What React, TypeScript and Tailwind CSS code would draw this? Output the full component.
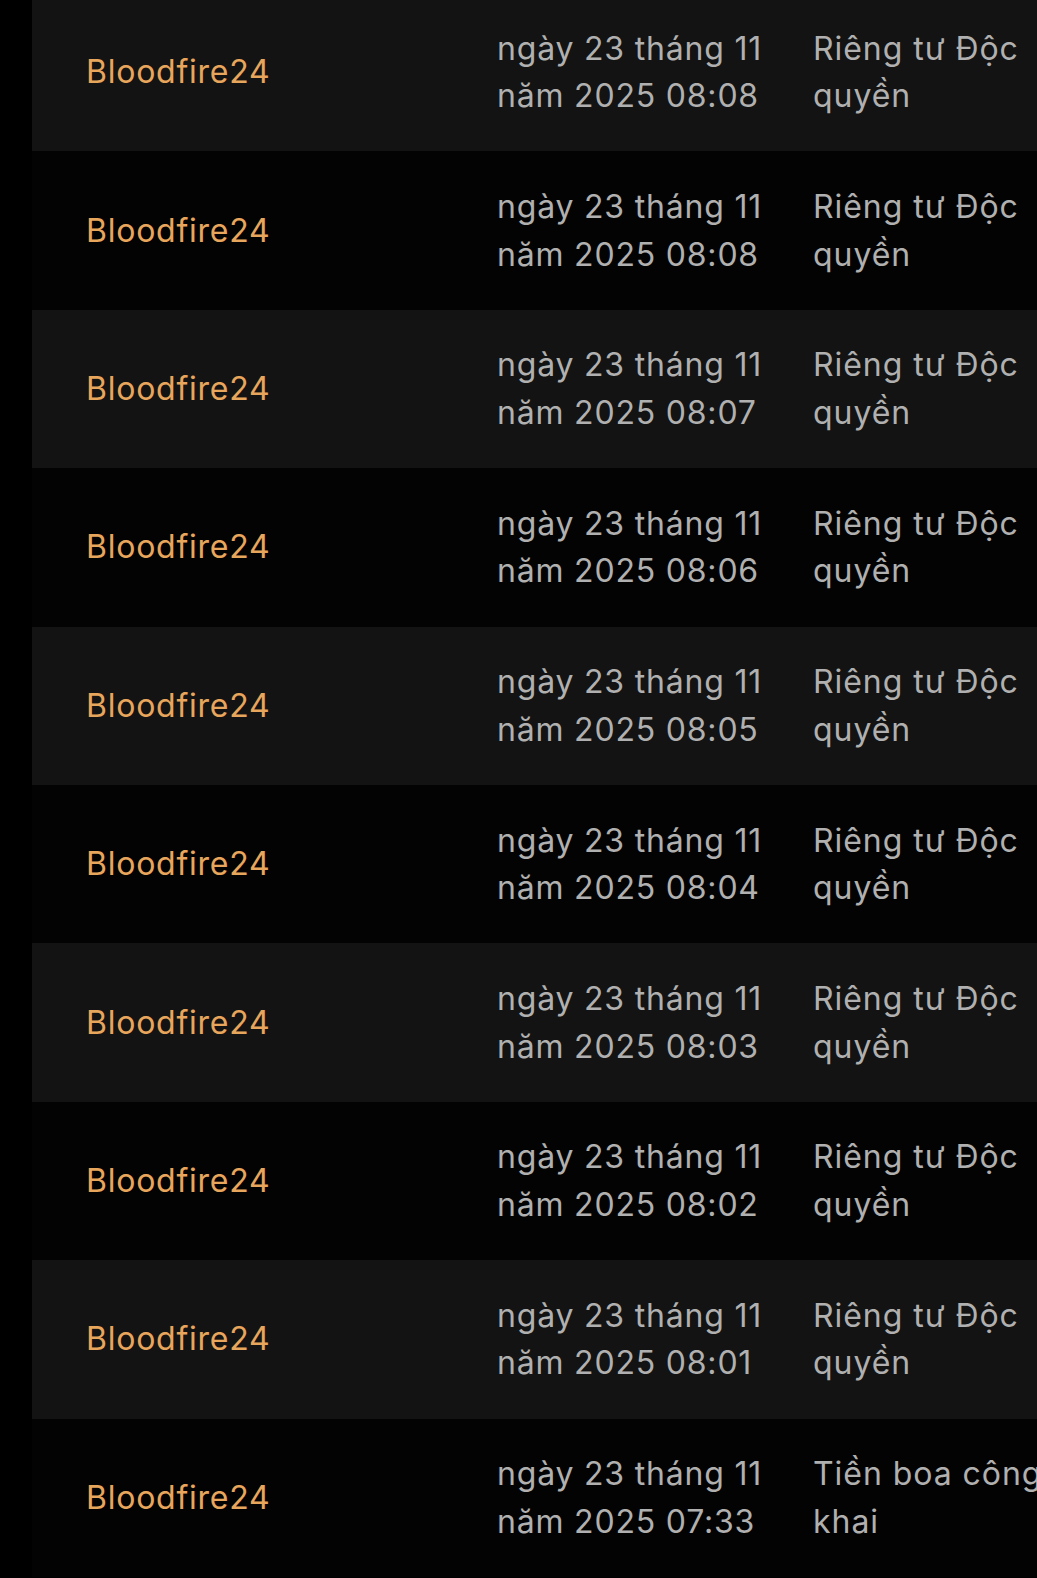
import React from "react";

const rows = [
  { time: "08:08", type: ["Riêng tư Độc", "quyền"] },
  { time: "08:08", type: ["Riêng tư Độc", "quyền"] },
  { time: "08:07", type: ["Riêng tư Độc", "quyền"] },
  { time: "08:06", type: ["Riêng tư Độc", "quyền"] },
  { time: "08:05", type: ["Riêng tư Độc", "quyền"] },
  { time: "08:04", type: ["Riêng tư Độc", "quyền"] },
  { time: "08:03", type: ["Riêng tư Độc", "quyền"] },
  { time: "08:02", type: ["Riêng tư Độc", "quyền"] },
  { time: "08:01", type: ["Riêng tư Độc", "quyền"] },
  { time: "07:33", type: ["Tiền boa công", "khai"] },
];

export default function App() {
  return (
    <div
      className="w-[1037px] h-[1578px] overflow-hidden bg-black"
      style={{ fontFamily: "Inter, 'Noto Sans', sans-serif" }}
    >
      <div className="-mt-[7px] pl-[32px]">
        {rows.map((r, i) => (
          <div
            key={i}
            className={`flex items-center h-[158.4px] w-[1200px] ${
              i % 2 === 0 ? "bg-[#131313]" : "bg-[#030303]"
            }`}
          >
            <div className="w-[465px] shrink-0 pl-[54px] text-[32px] tracking-[0.75px] text-[#e8a65c]">
              Bloodfire24
            </div>
            <div className="w-[316px] shrink-0 text-[32px] tracking-[0.8px] leading-[47.5px] text-[#b0b0b0]">
              <div>ngày 23 tháng 11</div>
              <div>năm 2025 {r.time}</div>
            </div>
            <div className="w-[300px] shrink-0 text-[32px] tracking-[0.95px] leading-[47.5px] text-[#b0b0b0]">
              <div className="whitespace-nowrap">{r.type[0]}</div>
              <div>{r.type[1]}</div>
            </div>
          </div>
        ))}
      </div>
    </div>
  );
}
